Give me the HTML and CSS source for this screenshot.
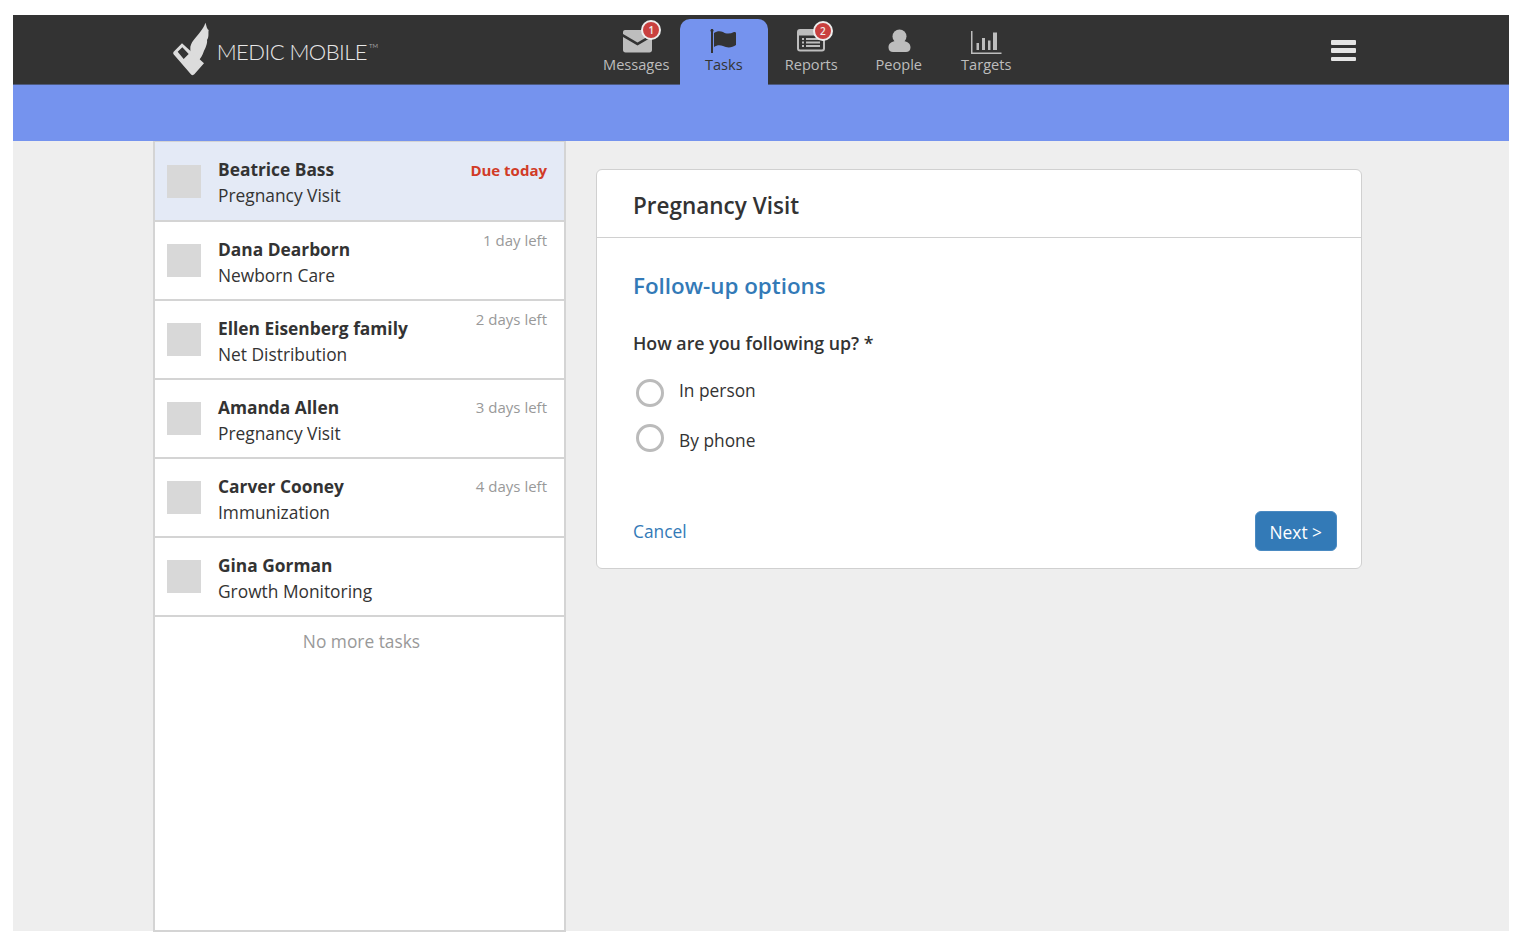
FILE: index.html
```html
<!DOCTYPE html>
<html lang="en">
<head>
<meta charset="utf-8">
<title>Medic Mobile - Tasks</title>
<link rel="stylesheet" href="styles.css">
</head>
<body>
<div class="screen">
  <header class="header">
    <div class="logo">
      <svg class="logo-mark" viewBox="0 0 120 180" width="40" height="60" aria-hidden="true">
        <path fill="#dcdcdc" fill-rule="evenodd" d="M5 95L30 70 96 130 67 163C64 166 61 166 58 164L6 104C3 101 3 98 5 95ZM17 95L35 117 50 102 31 82Z"/>
        <path fill="#dcdcdc" d="M55 80C60 60 75 50 85 35 92 25 98 18 100 8 104 15 103 25 110 30 108 40 112 50 105 60 107 70 100 85 95 95 92 105 85 115 80 122L55 97Z"/>
      </svg>
      <span class="logo-text">MEDIC MOBILE<sup class="tm">TM</sup></span>
    </div>
    <nav class="tabs">
      <a class="tab">
        <span class="tab-icon">
          <svg viewBox="0 0 32 24" width="32" height="24" aria-hidden="true"><path fill="#bdbdbd" d="M3 3c0-1.200 1-2 2-2h25c1 0 2 .8 2 2v2L17.500 13.500 3 5z"/><path fill="#bdbdbd" d="M3 8l14.500 8.500L32 8v13c0 1.500-1 2.500-2.500 2.500h-24C4 23.500 3 22.500 3 21z"/></svg>
          <span class="badge badge-wide">1</span>
        </span>
        <span class="tab-label">Messages</span>
      </a>
      <a class="tab tab-active">
        <span class="tab-icon">
          <svg viewBox="0 0 28 24" width="28" height="24" aria-hidden="true"><path fill="#333" d="M1 0h2v24H1z"/><circle cx="2" cy="1.500" r="1.500" fill="#333"/><path fill="#333" d="M4 4c3-2 6-2 9-1 3 2 7 2 11 0 1 0 2 0 2 1v12c-4 3-9 3-13 1-3-1-6-1-9 1z"/></svg>
        </span>
        <span class="tab-label">Tasks</span>
      </a>
      <a class="tab">
        <span class="tab-icon">
          <svg viewBox="0 0 28 24" width="28" height="24" aria-hidden="true"><rect x="1" y="1" width="26" height="20.500" rx="2" fill="#333" stroke="#bdbdbd" stroke-width="2"/><path fill="#bdbdbd" d="M2 2h24v4.500H2zM5 9h2v2H5zM9 9h14v2H9zM5 12.500h2v2H5zM9 12.500h14v2H9zM5 16h2v2H5zM9 16h14v2H9z"/></svg>
          <span class="badge">2</span>
        </span>
        <span class="tab-label">Reports</span>
      </a>
      <a class="tab">
        <span class="tab-icon">
          <svg viewBox="0 0 28 24" width="28" height="24" aria-hidden="true"><circle cx="14.500" cy="7.500" r="7" fill="#bdbdbd"/><path fill="#bdbdbd" d="M3.500 18.500c0-4 3-6 7-6.500 2 2 6 2 8 0 4 .5 7 2.500 7 6.500 0 3-2 4.500-4.500 4.500H8c-2.500 0-4.500-1.500-4.500-4.500z"/></svg>
        </span>
        <span class="tab-label">People</span>
      </a>
      <a class="tab">
        <span class="tab-icon">
          <svg viewBox="0 0 32 26" width="32" height="26" aria-hidden="true"><path fill="#bdbdbd" d="M1 2h1.500v21.500H31.500V25H1zM6.500 14h2.500v7H6.500zM12 9h3v12h-3zM18 11.500h2.500V21H18zM23 3.500h4V21h-4z"/></svg>
        </span>
        <span class="tab-label">Targets</span>
      </a>
    </nav>
    <div class="burger" aria-label="Menu"><i></i><i></i><i></i></div>
  </header>
  <div class="band"></div>
  <main class="content">
    <section class="list">
      <article class="task task-selected">
        <span class="thumb"></span>
        <div class="task-body"><h3 class="task-name">Beatrice Bass</h3><p class="task-type">Pregnancy Visit</p></div>
        <span class="due due-today">Due today</span>
      </article>
      <article class="task">
        <span class="thumb"></span>
        <div class="task-body"><h3 class="task-name">Dana Dearborn</h3><p class="task-type">Newborn Care</p></div>
        <span class="due">1 day left</span>
      </article>
      <article class="task">
        <span class="thumb"></span>
        <div class="task-body"><h3 class="task-name">Ellen Eisenberg family</h3><p class="task-type">Net Distribution</p></div>
        <span class="due">2 days left</span>
      </article>
      <article class="task">
        <span class="thumb"></span>
        <div class="task-body"><h3 class="task-name">Amanda Allen</h3><p class="task-type">Pregnancy Visit</p></div>
        <span class="due due-low">3 days left</span>
      </article>
      <article class="task">
        <span class="thumb"></span>
        <div class="task-body"><h3 class="task-name">Carver Cooney</h3><p class="task-type">Immunization</p></div>
        <span class="due due-low">4 days left</span>
      </article>
      <article class="task">
        <span class="thumb"></span>
        <div class="task-body"><h3 class="task-name">Gina Gorman</h3><p class="task-type">Growth Monitoring</p></div>
      </article>
      <p class="no-more">No more tasks</p>
    </section>
    <section class="card">
      <h1 class="card-title">Pregnancy Visit</h1>
      <div class="card-body">
        <h2 class="section-title">Follow-up options</h2>
        <p class="question">How are you following up? *</p>
        <label class="option option-first"><span class="radio"></span><span class="option-text">In person</span></label>
        <label class="option"><span class="radio"></span><span class="option-text">By phone</span></label>
        <div class="actions">
          <a class="cancel">Cancel</a>
          <button class="next" type="button">Next &gt;</button>
        </div>
      </div>
    </section>
  </main>
</div>
</body>
</html>
```
FILE: styles.css
```css
* { box-sizing: border-box; }
html, body { margin: 0; padding: 0; background: #fff; }
body {
  font-family: "Open Sans", "Liberation Sans", sans-serif;
  color: #333;
  overflow: hidden;
  height: 946px;
}
.screen {
  width: 1496px;
  height: 916px;
  margin: 15px 0 0 13px;
  background: #eee;
  display: flex;
  flex-direction: column;
}
.header {
  height: 70px;
  background: #333;
  border-bottom: 1px solid #4d5a80;
  display: flex;
  flex: none;
}
.logo {
  width: 579.500px;
  padding: 5px 0 0 158.670px;
  display: flex;
  align-items: flex-start;
  flex: none;
}
.logo-mark { flex: none; }
.logo-text {
  font-family: "Lato", sans-serif;
  font-weight: 300;
  font-size: 22px;
  letter-spacing: -0.550px;
  line-height: 28px;
  color: #e8e8e8;
  margin: 18px 0 0 5px;
  white-space: nowrap;
}
.tm { font-size: 6px; line-height: 6px; vertical-align: 12px; margin-left: 2px; letter-spacing: 0; }
.tabs { display: flex; flex: none; }
.tab {
  width: 87.500px;
  height: 69px;
  display: flex;
  flex-direction: column;
  align-items: center;
  color: #bdbdbd;
}
.tab-active {
  background: #7593ee;
  color: #333;
  border-radius: 10px 10px 0 0;
  margin-top: 4px;
  height: 66px;
  margin-bottom: -1px;
}
.tab-icon {
  position: relative;
  height: 24px;
  margin-top: 14px;
  display: block;
}
.tab-active .tab-icon { margin-top: 10px; }
.tab-icon svg { display: block; }
.tab-label {
  font-size: 14.600px;
  line-height: 20px;
  margin-top: 1px;
}
.badge {
  position: absolute;
  left: 15.500px;
  top: -8px;
  width: 20px;
  height: 20px;
  border-radius: 50%;
  background: #c9403f;
  border: 2px solid #eee;
  color: #eee;
  font-size: 10px;
  font-weight: 600;
  line-height: 16px;
  text-align: center;
}
.badge-wide { left: 21px; top: -9px; }
.burger {
  margin: 25px 0 0 300.500px;
  width: 25px;
  display: flex;
  flex-direction: column;
  gap: 3.750px;
}
.burger i { display: block; height: 4.500px; border-radius: 1px; background: #e4e4e4; }
.band { height: 56px; background: #7593ee; flex: none; }
.content {
  flex: 1;
  display: flex;
  align-items: flex-start;
  padding-left: 140px;
  min-height: 0;
}
.list {
  width: 413px;
  height: 791px;
  background: #fff;
  border: 2px solid #d4d4d4;
  border-top: 1px solid #d4d4d4;
  flex: none;
}
.task {
  height: 79px;
  padding: 0 17px 0 12px;
  border-bottom: 2px solid #d4d4d4;
  display: flex;
  align-items: flex-start;
}
.task-selected { background: #e4eaf6; height: 80px; }
.thumb {
  width: 34px;
  height: 33px;
  background: #d8d8d8;
  flex: none;
  margin-top: 22px;
}
.task-selected .thumb { margin-top: 23px; }
.task-body { flex: 1; margin: 15px 0 0 17px; min-width: 0; }
.task-name {
  margin: 0;
  font-size: 17.350px;
  font-weight: 700;
  line-height: 25px;
  color: #333;
}
.task-type {
  margin: 1px 0 0;
  font-size: 17.350px;
  font-weight: 400;
  line-height: 25px;
  color: #333;
}
.due {
  font-size: 15px;
  line-height: 20px;
  color: #999;
  margin-top: 8px;
  white-space: nowrap;
}
.due-low { margin-top: 17px; }
.due-today { color: #d13b27; font-weight: 700; margin-top: 18px; }
.no-more {
  margin: 12px 0 0;
  text-align: center;
  font-size: 17.350px;
  line-height: 24px;
  color: #999;
  padding-left: 4px;
}
.card {
  width: 766px;
  height: 400px;
  margin: 28px 0 0 30px;
  background: #fff;
  border: 1.500px solid #d0d0d0;
  border-radius: 6px;
  flex: none;
}
.card-title {
  margin: 0;
  height: 68px;
  padding: 21px 36px 0;
  font-size: 22.500px;
  font-weight: 600;
  line-height: 30px;
  color: #333;
  border-bottom: 1.500px solid #d0d0d0;
}
.card-body { padding: 0 24px 0 36px; }
.section-title {
  margin: 33px 0 0;
  font-size: 22.400px;
  font-weight: 600;
  line-height: 30px;
  color: #337ab7;
}
.question {
  margin: 30px 0 0;
  font-size: 17.800px;
  font-weight: 600;
  line-height: 24px;
  color: #333;
}
.option {
  display: flex;
  align-items: flex-start;
  margin-top: 10px;
  height: 35px;
}
.option-first { margin-top: 24px; }
.radio {
  width: 28px;
  height: 28px;
  border: 3.500px solid #bbb;
  border-radius: 50%;
  margin-left: 3px;
  flex: none;
}
.option-text {
  font-size: 17.350px;
  line-height: 24px;
  margin: -1px 0 0 15px;
  color: #333;
}
.option + .option .option-text { margin-top: 4px; }
.actions {
  display: flex;
  justify-content: space-between;
  align-items: center;
  margin-top: 52px;
}
.cancel { font-size: 17.350px; line-height: 24px; color: #337ab7; }
.next {
  width: 82.500px;
  height: 40px;
  background: #337ab7;
  border: 1px solid #4a8ac2;
  border-radius: 6px;
  color: #fff;
  font-family: inherit;
  font-size: 17.350px;
  line-height: 24px;
  padding: 1px 0 0;
}
```
